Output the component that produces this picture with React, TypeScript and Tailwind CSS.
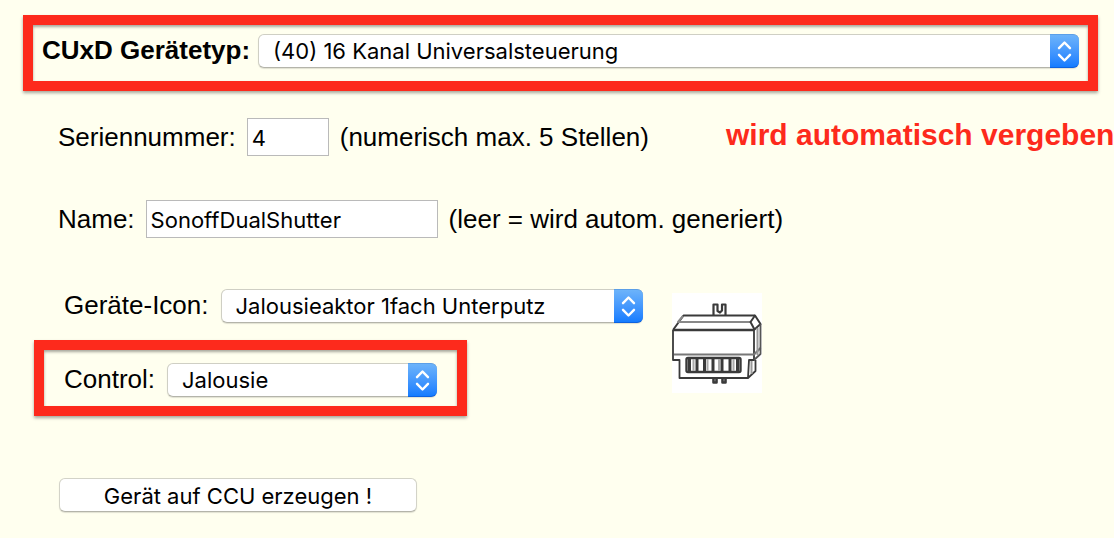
import React from "react";

const labelClass = "whitespace-nowrap leading-8";
const framedLabelClass = "whitespace-nowrap pb-[2px] leading-8";
const inputClass =
  "h-[38px] rounded-none border border-[#bababa] bg-white px-1 pt-0.5 font-['Inter','Noto_Sans',sans-serif] text-[22px] leading-7 text-black outline-none";

type SelectProps = {
  id: string;
  options: string[];
  className: string;
};

function Select({ id, options, className }: SelectProps) {
  return (
    <div className={`relative flex h-[34px] ${className}`}>
      <select
        id={id}
        className="h-[34px] w-full appearance-none rounded-md border border-[#cfcfc4] border-b-[#b4b4aa] bg-white pr-8 pl-[14px] font-['Inter','Noto_Sans',sans-serif] text-[22px] leading-7 text-black shadow-[0_1px_1px_rgba(0,0,0,0.12)] outline-none"
      >
        {options.map((option) => (
          <option key={option}>{option}</option>
        ))}
      </select>
      <span className="pointer-events-none absolute inset-y-0 right-0 flex w-[29px] items-center justify-center rounded-r-md border-t border-b border-t-[#5b9fe8] border-b-[#0d62e0] bg-linear-to-b from-[#6cb3fa] to-[#147cff]">
        <svg
          viewBox="0 0 29 32"
          className="h-8 w-[29px] fill-none stroke-white"
          strokeWidth="2.4"
          strokeLinecap="round"
          strokeLinejoin="round"
          aria-hidden="true"
        >
          <path d="M9 13.2 14.5 7.5 20 13.2M9 19.8 14.5 25.5 20 19.8" />
        </svg>
      </span>
    </div>
  );
}

function ActuatorIcon() {
  return (
    <svg
      viewBox="0 0 90 100"
      className="mt-1 h-[100px] w-[90px] shrink-0 bg-white"
      fill="none"
      stroke="#3a3a3a"
      strokeWidth="1.8"
      strokeLinejoin="round"
      role="img"
      aria-label="Jalousieaktor"
    >
      <path d="M41.5 22V11.5H45.5V18L48 19.5 50 17.5V11.5H53.5V22" strokeWidth="2.2" />
      <path d="M1 37 11.5 22.5H83" strokeWidth="2" />
      <path d="M11 23 6 29H79" stroke="#888" strokeWidth="2" />
      <path d="M1 37V67H7.5V85H76L77 67H82V37" />
      <path d="M1 37H82" strokeWidth="2.6" />
      <path d="M83 22.5 78.5 29 82.5 36.5 88.5 31Z" strokeWidth="2" />
      <path d="M2 61.5H82L88.5 55" stroke="#777" strokeWidth="2.2" />
      <path d="M88.5 31V61L82 67" stroke="#555" />
      <path d="M85.5 35V62" stroke="#999" strokeWidth="2" />
      <path d="M76 85 83.5 78V67" />
      <path d="M79.5 68V81" stroke="#999" strokeWidth="2" />
      <rect x="14.5" y="65" width="54" height="14" rx="1.5" strokeWidth="2.4" />
      <path d="M17.5 66V78M25 66V78M32.5 66V78M41 66V78M50 66V78M58 66V78M65.5 66V78" strokeWidth="3" />
      <path d="M21.5 66V78M35.5 66V78M47 66V78M61.5 66V78" stroke="#aaa" strokeWidth="2" />
      <path d="M41.5 85V89.5H44.5V86M50.5 85V89.5H53.5V86" strokeWidth="2.6" />
    </svg>
  );
}

const frameClass =
  "border-[10px] border-[#fd2a1c] shadow-[0_2px_3px_rgba(0,0,0,0.35),inset_0_2px_3px_rgba(0,0,0,0.35)]";

export default function App() {
  return (
    <main className="min-h-screen overflow-hidden bg-[#ffffef] pt-[15px] pb-6 font-['Liberation_Sans',Arial,sans-serif] text-[26px] text-black">
      <form onSubmit={(event) => event.preventDefault()}>
        <div className={`mr-4 ml-[23px] flex items-center gap-2 pt-[9px] pr-[9px] pb-[13px] pl-[9px] ${frameClass}`}>
          <label htmlFor="type" className={`font-bold ${framedLabelClass}`}>
            CUxD Gerätetyp:
          </label>
          <Select id="type" options={["(40) 16 Kanal Universalsteuerung"]} className="flex-1" />
        </div>

        <div className="mt-[27px] flex items-center pl-[58px]">
          <label htmlFor="serial" className={labelClass}>
            Seriennummer:
          </label>
          <input id="serial" defaultValue="4" className={`ml-[11px] w-[82px] shrink-0 ${inputClass}`} />
          <span className={`ml-[11px] ${labelClass}`}>(numerisch max. 5 Stellen)</span>
          <strong className="ml-[77px] pb-1 text-[30px] leading-8 font-bold whitespace-nowrap text-[#fd2a1c]">
            wird automatisch vergeben
          </strong>
        </div>

        <div className="mt-11 flex items-center pl-[58px]">
          <label htmlFor="name" className={labelClass}>
            Name:
          </label>
          <input id="name" defaultValue="SonoffDualShutter" className={`ml-[11px] w-[292px] ${inputClass}`} />
          <span className={`ml-[11px] ${labelClass}`}>(leer = wird autom. generiert)</span>
        </div>

        <div className="mt-[51px] flex items-start gap-[29px] pl-[34px]">
          <div className="flex flex-col items-start gap-[17px]">
            <div className="flex h-[34px] items-center gap-3 pl-[30px]">
              <label htmlFor="icon" className={framedLabelClass}>
                Geräte-Icon:
              </label>
              <Select id="icon" options={["Jalousieaktor 1fach Unterputz"]} className="w-[422px]" />
            </div>
            <div className={`flex items-center gap-3 pt-[13px] pr-5 pb-[9px] pl-5 ${frameClass}`}>
              <label htmlFor="control" className={framedLabelClass}>
                Control:
              </label>
              <Select id="control" options={["Jalousie"]} className="w-[270px]" />
            </div>
          </div>
          <ActuatorIcon />
        </div>

        <button
          type="submit"
          className="mt-[62px] ml-[59px] block h-[34px] w-[358px] rounded-md border border-[#d3d3c8] border-b-[#b4b4aa] bg-white pt-0.5 font-['Inter','Noto_Sans',sans-serif] text-[22px] leading-7 shadow-[0_1px_1px_rgba(0,0,0,0.12)]"
        >
          Gerät auf CCU erzeugen !
        </button>
      </form>
    </main>
  );
}
